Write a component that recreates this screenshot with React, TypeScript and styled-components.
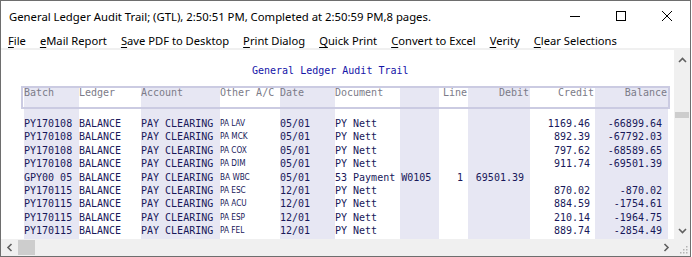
import styled, { createGlobalStyle } from "styled-components";

const GlobalStyle = createGlobalStyle`
  html, body {
    margin: 0;
    padding: 0;
    background: #ffffff;
  }
  body {
    font-family: "Noto Sans", "Open Sans", sans-serif;
  }
`;

const Window = styled.div`
  width: 689px;
  height: 255px;
  border: 1px solid #6e6e6e;
  background: #ffffff;
  display: flex;
  flex-direction: column;
  overflow: hidden;
`;

const TitleBar = styled.div`
  height: 30px;
  display: flex;
  align-items: center;
  flex-shrink: 0;
`;

const Caption = styled.div`
  flex: 1;
  padding-left: 8px;
  font-size: 11.3px;
  color: #000;
  white-space: nowrap;
`;

const CaptionButton = styled.div`
  width: 46px;
  height: 30px;
  display: flex;
  align-items: center;
  justify-content: center;
  svg {
    display: block;
  }
`;

const MenuBar = styled.div`
  height: 15px;
  padding-top: 2px;
  display: flex;
  flex-shrink: 0;
`;

const MenuItem = styled.div`
  padding: 0 7px;
  font-size: 11.2px;
  line-height: 15px;
  color: #000;
  white-space: nowrap;
  u {
    text-underline-offset: 2px;
  }
`;

const Separator = styled.div`
  height: 2px;
  background: #f0f0f0;
  flex-shrink: 0;
`;

const Client = styled.div`
  height: 189px;
  display: flex;
  flex-shrink: 0;
`;

const Report = styled.div`
  flex: 1;
  display: flex;
  flex-direction: column;
  overflow: hidden;
  font-family: "DejaVu Sans Mono", "Liberation Mono", monospace;
  font-size: 10px;
`;

const ReportTitle = styled.div`
  padding: 14px 0 0 251px;
  line-height: 14px;
  color: #1414a8;
  white-space: pre;
`;

const HeaderBox = styled.div`
  margin: 8px 0 0 20px;
  border: 2px solid #cbcbe2;
  padding-left: 1px;
  display: flex;
  align-self: flex-start;
`;

const HeaderCell = styled.div<{ $w: number; $band?: boolean; $right?: boolean }>`
  width: ${(p) => p.$w}px;
  height: 19px;
  box-sizing: border-box;
  padding-right: ${(p) => (p.$right ? 1 : 0)}px;
  line-height: 10px;
  text-align: ${(p) => (p.$right ? "right" : "left")};
  background: ${(p) => (p.$band ? "#e7e7f3" : "#ffffff")};
  color: #7b7b88;
  white-space: pre;
`;

const Body = styled.div`
  flex: 1;
  margin-left: 23px;
  display: flex;
`;

const Column = styled.div<{ $w: number; $band?: boolean; $over?: boolean }>`
  width: ${(p) => p.$w}px;
  flex-shrink: 0;
  padding-top: 8px;
  background: ${(p) => (p.$band ? "#e7e7f3" : "#ffffff")};
  z-index: ${(p) => (p.$over ? 1 : 0)};
`;

const Cell = styled.div<{ $right?: boolean; $pad?: number }>`
  height: 13.4px;
  line-height: 13.4px;
  box-sizing: border-box;
  padding-right: ${(p) => p.$pad ?? 0}px;
  text-align: ${(p) => (p.$right ? "right" : "left")};
  color: #18185a;
  white-space: pre;
`;

const SmallCell = styled(Cell)`
  font-family: "DejaVu Sans Condensed", "DejaVu Sans", sans-serif;
  font-size: 8.2px;
`;

const VScroll = styled.div`
  width: 16px;
  background: #f0f0f0;
  display: flex;
  flex-direction: column;
  flex-shrink: 0;
`;

const ArrowButton = styled.div<{ $h?: number; $w?: number }>`
  height: ${(p) => p.$h ?? 17}px;
  width: ${(p) => (p.$w ? `${p.$w}px` : "auto")};
  flex-shrink: 0;
  display: flex;
  align-items: center;
  justify-content: center;
`;

const Track = styled.div`
  flex: 1;
`;

const VThumb = styled.div`
  margin: 41px 1px 0 1px;
  height: 6px;
  background: #cdcdcd;
`;

const HScroll = styled.div`
  height: 17px;
  display: flex;
  background: #f0f0f0;
  flex-shrink: 0;
`;

const HThumb = styled.div`
  width: 17px;
  margin: 1px 0;
  background: #cdcdcd;
`;

const Corner = styled.div`
  width: 16px;
  display: flex;
  align-items: flex-end;
  justify-content: flex-end;
  padding: 0 2px 2px 0;
  box-sizing: border-box;
`;

const Chevron = ({ dir }: { dir: "up" | "down" | "left" | "right" }) => {
  const pts = {
    up: "1,5 4.5,1.5 8,5",
    down: "1,2 4.5,5.5 8,2",
    left: "5.5,1 2,4.5 5.5,8",
    right: "2.5,1 6,4.5 2.5,8",
  }[dir];
  const vertical = dir === "up" || dir === "down";
  return (
    <svg width={vertical ? 9 : 8} height={vertical ? 7 : 9}>
      <polyline points={pts} fill="none" stroke="#606060" strokeWidth="1.6" />
    </svg>
  );
};

const columns = [
  { key: "batch", title: "Batch", w: 55, band: true },
  { key: "ledger", title: "Ledger", w: 62 },
  { key: "account", title: "Account", w: 79, band: true },
  { key: "other", title: "Other A/C", w: 60, small: true },
  { key: "date", title: "Date", w: 55, band: true },
  { key: "doc", title: "Document", w: 65, over: true },
  { key: "gap", title: "", w: 39, band: true },
  { key: "line", title: "Line", w: 29, right: true, pad: 5 },
  { key: "debit", title: "Debit", w: 62, band: true, right: true, pad: 6 },
  { key: "credit", title: "Credit", w: 65, right: true, pad: 5 },
  { key: "balance", title: "Balance", w: 73, band: true, right: true, pad: 6 },
];

type Row = Record<string, string>;

const nett = (batch: string, other: string, date: string, credit: string, balance: string): Row => ({
  batch,
  ledger: "BALANCE",
  account: "PAY CLEARING",
  other,
  date,
  doc: "PY Nett",
  gap: "",
  line: "",
  debit: "",
  credit,
  balance,
});

const rows: Row[] = [
  nett("PY170108", "PA LAV", "05/01", "1169.46", "-66899.64"),
  nett("PY170108", "PA MCK", "05/01", "892.39", "-67792.03"),
  nett("PY170108", "PA COX", "05/01", "797.62", "-68589.65"),
  nett("PY170108", "PA DIM", "05/01", "911.74", "-69501.39"),
  {
    batch: "GPY00 05",
    ledger: "BALANCE",
    account: "PAY CLEARING",
    other: "BA WBC",
    date: "05/01",
    doc: "53 Payment W0105",
    gap: "",
    line: "1",
    debit: "69501.39",
    credit: "",
    balance: "",
  },
  nett("PY170115", "PA ESC", "12/01", "870.02", "-870.02"),
  nett("PY170115", "PA ACU", "12/01", "884.59", "-1754.61"),
  nett("PY170115", "PA ESP", "12/01", "210.14", "-1964.75"),
  nett("PY170115", "PA FEL", "12/01", "889.74", "-2854.49"),
];

const menu = [
  ["F", "ile"],
  ["e", "Mail Report"],
  ["S", "ave PDF to Desktop"],
  ["P", "rint Dialog"],
  ["Q", "uick Print"],
  ["C", "onvert to Excel"],
  ["V", "erity"],
  ["C", "lear Selections"],
];

function App() {
  return (
    <>
      <GlobalStyle />
      <Window>
        <TitleBar>
          <Caption>General Ledger Audit Trail; (GTL), 2:50:51 PM, Completed at 2:50:59 PM,8 pages.</Caption>
          <CaptionButton>
            <svg width="10" height="10">
              <line x1="0" y1="5.5" x2="10" y2="5.5" stroke="#000" strokeWidth="1" />
            </svg>
          </CaptionButton>
          <CaptionButton>
            <svg width="10" height="10">
              <rect x="0.5" y="0.5" width="9" height="9" fill="none" stroke="#000" strokeWidth="1" />
            </svg>
          </CaptionButton>
          <CaptionButton>
            <svg width="10" height="10">
              <path d="M0 0 L10 10 M10 0 L0 10" stroke="#000" strokeWidth="1" />
            </svg>
          </CaptionButton>
        </TitleBar>
        <MenuBar>
          {menu.map(([key, rest], i) => (
            <MenuItem key={i}>
              <u>{key}</u>
              {rest}
            </MenuItem>
          ))}
        </MenuBar>
        <Separator />
        <Client>
          <Report>
            <ReportTitle>General Ledger Audit Trail</ReportTitle>
            <HeaderBox>
              {columns.map((c) => (
                <HeaderCell key={c.key} $w={c.w} $band={c.band} $right={c.right}>
                  {c.title}
                </HeaderCell>
              ))}
            </HeaderBox>
            <Body>
              {columns.map((c) => (
                <Column key={c.key} $w={c.w} $band={c.band} $over={c.over}>
                  {rows.map((r, i) =>
                    c.small ? (
                      <SmallCell key={i}>{r[c.key]}</SmallCell>
                    ) : (
                      <Cell key={i} $right={c.right} $pad={c.pad}>
                        {r[c.key]}
                      </Cell>
                    )
                  )}
                </Column>
              ))}
            </Body>
          </Report>
          <VScroll>
            <ArrowButton $h={21}>
              <Chevron dir="up" />
            </ArrowButton>
            <Track>
              <VThumb />
            </Track>
            <ArrowButton>
              <Chevron dir="down" />
            </ArrowButton>
          </VScroll>
        </Client>
        <HScroll>
          <ArrowButton $w={17}>
            <Chevron dir="left" />
          </ArrowButton>
          <HThumb />
          <Track />
          <ArrowButton $w={17}>
            <Chevron dir="right" />
          </ArrowButton>
          <Corner>
            <svg width="9" height="9">
              {[
                [7, 1],
                [4, 4],
                [7, 4],
                [1, 7],
                [4, 7],
                [7, 7],
              ].map(([x, y], i) => (
                <rect key={i} x={x} y={y} width="1.5" height="1.5" fill="#b4b4b4" />
              ))}
            </svg>
          </Corner>
        </HScroll>
      </Window>
    </>
  );
}

export default App;
